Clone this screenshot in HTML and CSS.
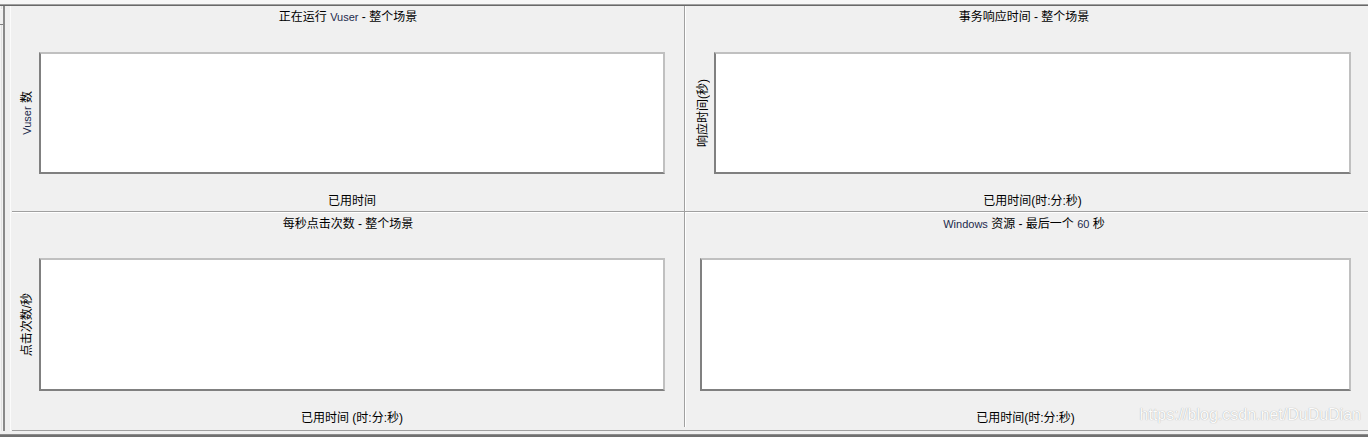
FILE: index.html
```html
<!DOCTYPE html>
<html lang="zh-CN">
<head>
    <meta charset="UTF-8">
    <title>场景监控</title>
    <link rel="stylesheet" href="styles.css">
</head>
<body>
    <div class="topbar"></div>

    <div class="main">
        <div class="side">
            <div class="track"><div class="thumb"></div></div>
            <div class="edge"></div>
        </div>

        <div class="graphs">
            <!-- 正在运行 Vuser -->
            <div class="graph graph-tl">
                <div class="graph-title">正在运行 <span class="lat">Vuser</span> - 整个场景</div>
                <div class="chart-row">
                    <div class="y-label"><span><span class="lat">Vuser</span> 数</span></div>
                    <div class="plot"></div>
                </div>
                <div class="x-row">
                    <div class="x-label">已用时间</div>
                </div>
            </div>

            <!-- 事务响应时间 -->
            <div class="graph graph-tr">
                <div class="graph-title">事务响应时间 - 整个场景</div>
                <div class="chart-row">
                    <div class="y-label"><span>响应时间(秒)</span></div>
                    <div class="plot"></div>
                </div>
                <div class="x-row">
                    <div class="x-label">已用时间(时:分:秒)</div>
                </div>
            </div>

            <!-- 每秒点击次数 -->
            <div class="graph graph-bl">
                <div class="graph-title">每秒点击次数 - 整个场景</div>
                <div class="chart-row">
                    <div class="y-label"><span>点击次数/秒</span></div>
                    <div class="plot"></div>
                </div>
                <div class="x-row">
                    <div class="x-label">已用时间 (时:分:秒)</div>
                </div>
            </div>

            <!-- Windows 资源 -->
            <div class="graph graph-br">
                <div class="graph-title"><span class="lat">Windows</span> 资源 - 最后一个 <span class="lat">60</span> 秒</div>
                <div class="chart-row">
                    <div class="plot"></div>
                </div>
                <div class="x-row">
                    <div class="x-label">已用时间(时:分:秒)</div>
                </div>
                <div class="watermark">https://blog.csdn.net/DuDuDian</div>
            </div>
        </div>
    </div>

    <div class="bottombar"></div>
</body>
</html>
```

FILE: styles.css
```css
html, body {
    margin: 0;
    padding: 0;
}
body {
    width: 1368px;
    height: 437px;
    overflow: hidden;
    background-color: #f0f0f0;
    font-family: "Liberation Sans", "Noto Sans CJK SC", sans-serif;
    font-size: 12px;
    color: #000;
}

.topbar {
    height: 4px;
    background-color: #f7f7f7;
    border-bottom: 1px solid #a0a0a0;
    box-shadow: 0 1px 0 #696969;
    margin-bottom: 1px;
}

.main {
    display: flex;
}

.side {
    display: flex;
    width: 12px;
    height: 425px;
}
.track {
    width: 3px;
    background-color: #e2e2e2;
    background-image: linear-gradient(90deg, #f4f4f4 1px, transparent 1px);
    background-size: 2px 2px;
}
.thumb {
    height: 14px;
    margin-top: 3px;
    border-top: 1px solid #f8f8f8;
    border-bottom: 1px solid #808080;
    background-color: #f0f0f0;
}
.edge {
    width: 5px;
    border-left: 2px solid #8a8a8a;
    border-right: 1px solid #fbfbfb;
}

.graphs {
    display: grid;
    grid-template-columns: 672px 1fr;
    grid-template-rows: 205px 216px;
    flex: 1;
    border-bottom: 1px solid #a0a0a0;
}

.graph {
    position: relative;
    display: flex;
    flex-direction: column;
}
.graph-tr {
    border-left: 1px solid #a0a0a0;
    box-shadow: inset 1px 0 0 #fff;
    padding-left: 1px;
}
.graph-bl {
    border-top: 1px solid #a0a0a0;
    box-shadow: inset 0 1px 0 #fff;
    padding-top: 1px;
}
.graph-br {
    border-top: 1px solid #a0a0a0;
    border-left: 1px solid #a0a0a0;
    box-shadow: inset 1px 1px 0 #fff;
    padding-top: 1px;
    padding-left: 1px;
}

.graph-title {
    line-height: 14px;
    padding-top: 4px;
    text-align: center;
    white-space: nowrap;
}
.graph-tr .graph-title,
.graph-br .graph-title {
    padding-right: 6px;
}

.lat {
    font-size: 11px;
    color: #1c2a4c;
}

.chart-row {
    display: flex;
    margin-top: 28px;
}
.graph-bl .chart-row,
.graph-br .chart-row {
    margin-top: 27px;
}

.y-label {
    width: 27px;
    display: flex;
    align-items: center;
    justify-content: center;
    padding-left: 2px;
    box-sizing: border-box;
}
.graph-tr .y-label {
    width: 28px;
    padding-left: 6px;
}
.y-label span {
    writing-mode: vertical-rl;
    text-orientation: sideways;
    transform: rotate(180deg);
    line-height: 12px;
    white-space: nowrap;
}
.y-label .lat {
    display: inline;
    writing-mode: inherit;
    transform: none;
}

.plot {
    box-sizing: border-box;
    width: 626px;
    height: 122px;
    background-color: #fff;
    border-left: 2px solid #808080;
    border-bottom: 2px solid #808080;
    border-top: 2px solid #c0c0c0;
    border-right: 2px solid #c0c0c0;
}
.graph-tr .plot {
    width: 637px;
}
.graph-bl .plot {
    height: 133px;
}
.graph-br .plot {
    height: 133px;
    width: 651px;
    margin-left: 14px;
}

.x-row {
    margin-top: 20px;
    padding-left: 27px;
}
.x-label {
    width: 626px;
    line-height: 14px;
    text-align: center;
    white-space: nowrap;
}
.graph-tr .x-row {
    padding-left: 28px;
}
.graph-tr .x-label {
    width: 637px;
}
.graph-br .x-row {
    padding-left: 14px;
}
.graph-br .x-label {
    width: 651px;
}

.watermark {
    position: absolute;
    right: 7px;
    bottom: 3px;
    font-family: "Liberation Sans", sans-serif;
    font-size: 16px;
    line-height: 18px;
    color: #fbfbfb;
    text-shadow: 0 0 1px #9a9a9a;
    white-space: nowrap;
}

.bottombar {
    height: 2px;
    margin-top: 3px;
    background-color: #707070;
    border-top: 1px solid #8c8c8c;
}
```
